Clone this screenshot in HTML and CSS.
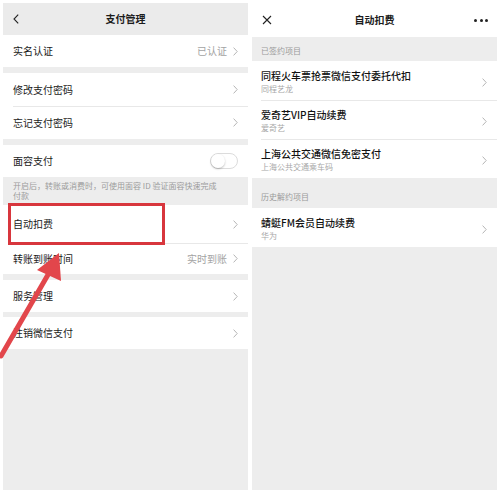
FILE: index.html
```html
<!DOCTYPE html>
<html lang="zh-CN">
<head>
<meta charset="utf-8">
<title>支付管理 / 自动扣费</title>
<link rel="stylesheet" href="styles.css">
</head>
<body>
<div class="screens">
  <section class="phone">
    <header class="nav nav-gray">
      <span class="nav-side nav-left">
        <svg class="ico-back" width="6" height="10" viewBox="0 0 6 10"><polyline points="5.2,0.6 1,5 5.2,9.4" fill="none" stroke="#222" stroke-width="1.1"/></svg>
      </span>
      <h1>支付管理</h1>
      <span class="nav-side"></span>
    </header>

    <div class="group first">
      <div class="row"><span class="label">实名认证</span><span class="value">已认证</span><svg class="chev" width="5" height="9" viewBox="0 0 5 9"><polyline points="0.6,0.6 4.2,4.5 0.6,8.4" fill="none" stroke="#b5b5b5" stroke-width="1"/></svg></div>
    </div>

    <div class="group">
      <div class="row tall"><span class="label">修改支付密码</span><svg class="chev" width="5" height="9" viewBox="0 0 5 9"><polyline points="0.6,0.6 4.2,4.5 0.6,8.4" fill="none" stroke="#b5b5b5" stroke-width="1"/></svg></div>
      <div class="row tall"><span class="label">忘记支付密码</span><svg class="chev" width="5" height="9" viewBox="0 0 5 9"><polyline points="0.6,0.6 4.2,4.5 0.6,8.4" fill="none" stroke="#b5b5b5" stroke-width="1"/></svg></div>
    </div>

    <div class="group">
      <div class="row"><span class="label">面容支付</span><span class="toggle"><span class="knob"></span></span></div>
    </div>
    <p class="note">开启后，转账或消费时，可使用面容 ID 验证面容快速完成<br>付款</p>

    <div class="group flush">
      <div class="row auto"><span class="label">自动扣费</span><svg class="chev" width="5" height="9" viewBox="0 0 5 9"><polyline points="0.6,0.6 4.2,4.5 0.6,8.4" fill="none" stroke="#b5b5b5" stroke-width="1"/></svg></div>
      <div class="row short"><span class="label">转账到账时间</span><span class="value">实时到账</span><svg class="chev" width="5" height="9" viewBox="0 0 5 9"><polyline points="0.6,0.6 4.2,4.5 0.6,8.4" fill="none" stroke="#b5b5b5" stroke-width="1"/></svg></div>
    </div>

    <div class="group">
      <div class="row"><span class="label">服务管理</span><svg class="chev" width="5" height="9" viewBox="0 0 5 9"><polyline points="0.6,0.6 4.2,4.5 0.6,8.4" fill="none" stroke="#b5b5b5" stroke-width="1"/></svg></div>
    </div>

    <div class="group gap5">
      <div class="row"><span class="label">注销微信支付</span><svg class="chev" width="5" height="9" viewBox="0 0 5 9"><polyline points="0.6,0.6 4.2,4.5 0.6,8.4" fill="none" stroke="#b5b5b5" stroke-width="1"/></svg></div>
    </div>
  </section>

  <section class="phone">
    <header class="nav nav-white">
      <span class="nav-side nav-left">
        <svg width="10" height="10" viewBox="0 0 10 10"><path d="M1 1 L9 9 M9 1 L1 9" stroke="#222" stroke-width="1.1" fill="none"/></svg>
      </span>
      <h1>自动扣费</h1>
      <span class="nav-side nav-right">
        <span class="dots"><i></i><i></i><i></i></span>
      </span>
    </header>

    <div class="section-label">已签约项目</div>
    <div class="list">
      <div class="item">
        <div class="item-text"><div class="item-title">同程火车票抢票微信支付委托代扣</div><div class="item-sub">同程艺龙</div></div>
        <svg class="chev" width="5" height="9" viewBox="0 0 5 9"><polyline points="0.6,0.6 4.2,4.5 0.6,8.4" fill="none" stroke="#b5b5b5" stroke-width="1"/></svg>
      </div>
      <div class="item">
        <div class="item-text"><div class="item-title">爱奇艺VIP自动续费</div><div class="item-sub">爱奇艺</div></div>
        <svg class="chev" width="5" height="9" viewBox="0 0 5 9"><polyline points="0.6,0.6 4.2,4.5 0.6,8.4" fill="none" stroke="#b5b5b5" stroke-width="1"/></svg>
      </div>
      <div class="item">
        <div class="item-text"><div class="item-title">上海公共交通微信免密支付</div><div class="item-sub">上海公共交通乘车码</div></div>
        <svg class="chev" width="5" height="9" viewBox="0 0 5 9"><polyline points="0.6,0.6 4.2,4.5 0.6,8.4" fill="none" stroke="#b5b5b5" stroke-width="1"/></svg>
      </div>
    </div>

    <div class="section-label history">历史解约项目</div>
    <div class="list">
      <div class="item">
        <div class="item-text"><div class="item-title">蜻蜓FM会员自动续费</div><div class="item-sub">华为</div></div>
        <svg class="chev" width="5" height="9" viewBox="0 0 5 9"><polyline points="0.6,0.6 4.2,4.5 0.6,8.4" fill="none" stroke="#b5b5b5" stroke-width="1"/></svg>
      </div>
    </div>
  </section>

  <svg class="annotation" width="500" height="490" viewBox="0 0 500 490">
    <rect x="9.5" y="204.5" width="154" height="39" fill="none" stroke="#d8363d" stroke-width="3"/>
    <line x1="1" y1="356" x2="49" y2="273" stroke="#e2464b" stroke-width="5" stroke-linecap="round"/>
    <polygon points="59,253 37,270 61,281" fill="#e2464b"/>
  </svg>
</div>
</body>
</html>
```

FILE: styles.css
```css
html, body {
  margin: 0;
  padding: 0;
  background: #ffffff;
}

body {
  font-family: "Noto Sans CJK SC", "Noto Sans", sans-serif;
  color: #1a1a1a;
}

.screens {
  position: relative;
  display: flex;
  gap: 4px;
  padding: 3px 3px 0;
  height: 490px;
  box-sizing: border-box;
  overflow: hidden;
}

.phone {
  flex: 1;
  min-width: 0;
  background: #ededed;
  display: flex;
  flex-direction: column;
}

/* navigation bars */
.nav {
  display: grid;
  grid-template-columns: 40px 1fr 40px;
  align-items: center;
  flex-shrink: 0;
}

.nav-gray {
  height: 32px;
  background: #ebebeb;
}

.nav-white {
  height: 34px;
  background: #ffffff;
}

.nav h1 {
  margin: 0;
  text-align: center;
  font-size: 10px;
  font-weight: 700;
  color: #1c1c1c;
  line-height: 14px;
}

.nav-side {
  display: flex;
  align-items: center;
}

.nav-left {
  padding-left: 10px;
}

.nav-right {
  justify-content: flex-end;
  padding-right: 9px;
}

.dots {
  display: flex;
  gap: 2.5px;
}

.dots i {
  width: 3px;
  height: 3px;
  border-radius: 50%;
  background: #222;
}

/* left list */
.group {
  background: #ffffff;
  margin-top: 6px;
}

.group.first,
.group.flush {
  margin-top: 0;
}

.group.gap5 {
  margin-top: 5px;
}

.row {
  position: relative;
  display: flex;
  align-items: center;
  height: 32px;
  padding: 0 10px;
  font-size: 10px;
  line-height: 14px;
  color: #1a1a1a;
}

.row.tall {
  height: 33px;
}

.row.auto {
  height: 38px;
}

.row.short {
  height: 31px;
}

.row + .row::before {
  content: "";
  position: absolute;
  top: 0;
  left: 10px;
  right: 0;
  height: 1px;
  background: #e8e8e8;
}

.label {
  flex: 1;
}

.value {
  color: #a3a3a3;
  margin-right: 6px;
}

.chev {
  flex-shrink: 0;
  display: block;
}

.toggle {
  width: 28px;
  height: 16px;
  box-sizing: border-box;
  border: 1px solid #dcdcdc;
  border-radius: 8px;
  background: #ffffff;
  position: relative;
}

.knob {
  position: absolute;
  left: 0;
  top: 0;
  width: 14px;
  height: 14px;
  border-radius: 50%;
  background: #ffffff;
  box-shadow: 0 1px 2px rgba(0, 0, 0, 0.25);
}

.note {
  margin: 0;
  padding: 4px 10px 4px;
  height: 28px;
  box-sizing: border-box;
  font-size: 8px;
  line-height: 10px;
  color: #9b9b9b;
}

/* right list */
.section-label {
  padding: 8px 9px 4px;
  font-size: 8px;
  line-height: 12px;
  color: #9a9a9a;
}

.section-label.history {
  padding: 13px 9px 5px;
}

.list {
  background: #ffffff;
}

.item {
  position: relative;
  display: flex;
  align-items: center;
  height: 39px;
  box-sizing: border-box;
  padding: 8px 10px 5px 9px;
}

.item + .item::before {
  content: "";
  position: absolute;
  top: 0;
  left: 9px;
  right: 0;
  height: 1px;
  background: #e8e8e8;
}

.item-text {
  flex: 1;
  min-width: 0;
}

.item-title {
  font-size: 10px;
  line-height: 14px;
  font-weight: 500;
  color: #111111;
}

.item-sub {
  font-size: 8px;
  line-height: 12px;
  color: #a8a8a8;
}

/* annotation overlay */
.annotation {
  position: absolute;
  left: 0;
  top: 0;
  pointer-events: none;
}
```
